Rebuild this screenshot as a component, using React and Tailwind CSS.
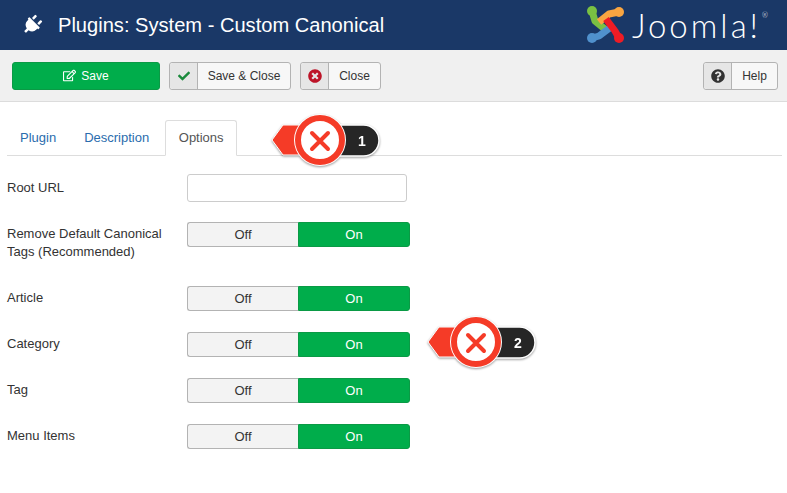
import { FaPlug, FaCheck, FaTimesCircle, FaQuestionCircle, FaRegEdit } from 'react-icons/fa';

function ToolButton({ icon, label, width }) {
  return (
    <button className={`flex h-[28px] ${width} items-stretch rounded-[3px] border border-[#b3b3b3] bg-[#f7f7f7] text-[12px] text-[#333]`}>
      <span className="flex w-[28px] shrink-0 items-center justify-center rounded-l-[3px] border-r border-[#b3b3b3] bg-[#e6e6e6]">
        {icon}
      </span>
      <span className="flex flex-1 items-center justify-center">{label}</span>
    </button>
  );
}

function Toggle() {
  return (
    <div className="flex h-[25px] w-[223px] text-[13px]">
      <div className="flex w-[111px] items-center justify-center rounded-l-[3px] border border-r-0 border-[#b3b3b3] bg-[#f3f3f3] text-[#333]">Off</div>
      <div className="flex flex-1 items-center justify-center rounded-r-[3px] border border-[#0a9a45] bg-[#00ad4b] text-white">On</div>
    </div>
  );
}

function Row({ label, className, labelClass = 'pb-[2px]', children }) {
  return (
    <div className={`flex ${className}`}>
      <div className={`w-[180px] pr-[14px] text-[13px] leading-[18px] text-[#333] ${labelClass}`}>{label}</div>
      {children}
    </div>
  );
}

function Callout({ n, className }) {
  return (
    <svg className={`absolute drop-shadow-[0_1px_1px_rgba(0,0,0,0.4)] ${className}`} width="116" height="64" viewBox="0 0 116 64">
      <rect x="44" y="15" width="66" height="31" rx="15.5" fill="#262626" stroke="#fff" strokeWidth="1.5" />
      <path d="M3 30 L14 15 H52 V45 H14 Z" fill="#f53b27" stroke="#fff" strokeWidth="1" strokeLinejoin="round" />
      <circle cx="51" cy="30" r="26" fill="#fff" />
      <circle cx="51" cy="30" r="22" fill="#fff" stroke="#f53b27" strokeWidth="6" />
      <path d="M43 23 L59 39 M59 23 L43 39" stroke="#f53b27" strokeWidth="4" strokeLinecap="round" />
      <text x="93" y="36" textAnchor="middle" fontSize="14" fontWeight="700" fill="#fff">{n}</text>
    </svg>
  );
}

function JoomlaMark() {
  return (
    <svg width="38" height="38" viewBox="0 0 38 38" fill="none" strokeWidth="7" strokeLinejoin="round">
      <path d="M5 5 L8 15 L19 24" stroke="#7ac143" />
      <circle cx="5" cy="5" r="5" fill="#7ac143" />
      <path d="M32 6 L22 8 L12 16" stroke="#f9a541" />
      <circle cx="32" cy="6" r="5" fill="#f9a541" />
      <path d="M5 32 L12 30 L24 21" stroke="#5091cd" />
      <circle cx="5" cy="32" r="5" fill="#5091cd" />
      <path d="M32 32 L28 25 L19 13" stroke="#ee1c25" />
      <circle cx="32" cy="32" r="5" fill="#ee1c25" />
    </svg>
  );
}

export default function App() {
  return (
    <div className="relative h-[493px] w-[787px] overflow-hidden bg-white font-['Liberation_Sans',sans-serif]">
      <header className="flex h-[50px] items-center justify-between bg-[#1a3867] pl-[22px] pr-[19px]">
        <div className="flex items-center gap-[16px] text-white">
          <FaPlug className="h-[20px] w-[20px] rotate-45" />
          <h1 className="text-[20.1px]">Plugins: System - Custom Canonical</h1>
        </div>
        <div className="flex items-center gap-[7px]">
          <JoomlaMark />
          <span className="relative pr-[7px] font-['Lato',sans-serif] text-[33px] font-light leading-none tracking-[3px] text-white">
            Joomla!
            <span className="absolute right-0 top-[3px] text-[7px] leading-none tracking-normal">®</span>
          </span>
        </div>
      </header>

      <div className="flex h-[52px] items-center justify-between border-b border-[#dcdcdc] bg-[#f0f0f0] pl-[12px] pr-[9px]">
        <div className="flex items-center gap-[9px]">
          <button className="flex h-[28px] w-[148px] items-center justify-center gap-[5px] rounded-[3px] border border-[#0a9a45] bg-[#00ad4b] text-[12px] text-white">
            <FaRegEdit className="h-[13px] w-[13px]" />
            Save
          </button>
          <ToolButton width="w-[122px]" label="Save & Close" icon={<FaCheck className="h-[12px] w-[12px] text-[#1a8a3c]" />} />
          <ToolButton width="w-[81px]" label="Close" icon={<FaTimesCircle className="h-[14px] w-[14px] text-[#bd1428]" />} />
        </div>
        <ToolButton width="w-[75px]" label="Help" icon={<FaQuestionCircle className="h-[14px] w-[14px] text-[#333]" />} />
      </div>

      <div className="mx-[7px] mt-[18px] flex h-[36px] w-[775px] items-end border-b border-[#ddd] text-[13px]">
        <a className="flex h-[35px] items-center pl-[13px] pr-[14px] text-[#2a6cad]">Plugin</a>
        <a className="flex h-[35px] items-center pl-[14px] pr-[16px] text-[#2a6cad]">Description</a>
        <a className="-mb-px flex h-[36px] w-[72px] items-center justify-center rounded-t-[3px] border border-[#ddd] border-b-white bg-white text-[#555]">Options</a>
      </div>

      <div className="px-[7px]">
        <Row label="Root URL" labelClass="" className="mt-[18px] items-center">
          <input className="h-[28px] w-[220px] rounded-[3px] border border-[#ccc] bg-white" />
        </Row>
        <Row label="Remove Default Canonical Tags (Recommended)" labelClass="pt-[3px]" className="mt-[20px]">
          <Toggle />
        </Row>
        <Row label="Article" className="mt-[25px] items-center"><Toggle /></Row>
        <Row label="Category" className="mt-[21px] items-center"><Toggle /></Row>
        <Row label="Tag" className="mt-[21px] items-center"><Toggle /></Row>
        <Row label="Menu Items" className="mt-[21px] items-center"><Toggle /></Row>
      </div>

      <Callout n="1" className="left-[269px] top-[110px]" />
      <Callout n="2" className="left-[425px] top-[312px]" />
    </div>
  );
}
